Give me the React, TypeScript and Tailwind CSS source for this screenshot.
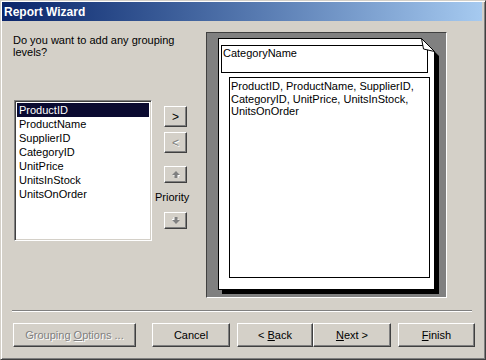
import React from 'react'

const FIELDS = ['ProductID', 'ProductName', 'SupplierID', 'CategoryID', 'UnitPrice', 'UnitsInStock', 'UnitsOnOrder']

// classic raised 3D button edge
const raised =
  'border border-t-white border-l-white border-r-[#404040] border-b-[#404040] shadow-[inset_-1px_-1px_0_#808080] bg-[#d4d0c8]'

const disabledText = 'text-[#808080] [text-shadow:1px_1px_0_#ffffff]'

function Arrow({ down }: { down?: boolean }) {
  return (
    <svg width="8" height="7" viewBox="0 0 8 7" className={down ? 'rotate-180' : ''}>
      <path d="M4 0 L8 4 L5.5 4 L5.5 7 L2.5 7 L2.5 4 L0 4 Z" fill="#ffffff" transform="translate(1 1)" />
      <path d="M4 0 L8 4 L5.5 4 L5.5 7 L2.5 7 L2.5 4 L0 4 Z" fill="#808080" />
    </svg>
  )
}

function Btn({ w, children, disabled }: { w: string; children: React.ReactNode; disabled?: boolean }) {
  return (
    <div className={`${w} h-[24px] flex items-center justify-center text-[11px] ${raised} ${disabled ? disabledText : 'text-black'}`}>
      {children}
    </div>
  )
}

export default function App() {
  return (
    <div className="w-[486px] h-[360px] overflow-hidden bg-[#d4d0c8] font-['Liberation_Sans',Arial,sans-serif] text-black border border-t-[#d4d0c8] border-l-[#d4d0c8] border-r-[#404040] border-b-[#404040] shadow-[inset_1px_1px_0_#ffffff,inset_-1px_-1px_0_#808080] pl-[1px] pr-[3px] pt-[1px]">
      {/* Title bar */}
      <div className="h-[19px] flex items-center pl-[2px] bg-gradient-to-r from-[#0a246a] to-[#a6caf0]">
        <span className="text-white text-[12px] font-bold leading-none">Report Wizard</span>
      </div>

      {/* Body */}
      <div className="flex h-[289px] pl-[11px] pt-[11px]">
        <div className="w-[193px] flex flex-col">
          <p className="mt-[2px] text-[11px] leading-[12px]">
            Do you want to add any grouping
            <br />
            levels?
          </p>

          <div className="mt-[42px] ml-[1px] flex">
            {/* Field list */}
            <div className="w-[138px] h-[141px] bg-white border border-t-[#808080] border-l-[#808080] border-r-white border-b-white shadow-[inset_1px_1px_0_#404040,inset_-1px_-1px_0_#d4d0c8] p-[2px]">
              {FIELDS.map((f, i) => (
                <div
                  key={f}
                  className={`h-[14px] leading-[14px] text-[11px] px-[2px] ${i === 0 ? 'bg-[#0a0a30] text-white' : ''}`}
                >
                  {f}
                </div>
              ))}
            </div>

            {/* Move / priority controls */}
            <div className="ml-[3px] w-[35px] flex flex-col">
              <div className={`ml-[9px] mt-[6px] w-[23px] h-[21px] flex items-center justify-center text-[12px] ${raised}`}>&gt;</div>
              <div className={`ml-[9px] mt-[5px] w-[23px] h-[21px] flex items-center justify-center text-[12px] ${raised} ${disabledText}`}>&lt;</div>
              <div className={`ml-[9px] mt-[13px] w-[23px] h-[17px] flex items-center justify-center ${raised}`}>
                <Arrow />
              </div>
              <div className="mt-[8px] text-[11px] leading-[13px]">Priority</div>
              <div className={`ml-[9px] mt-[8px] w-[23px] h-[17px] flex items-center justify-center ${raised}`}>
                <Arrow down />
              </div>
            </div>
          </div>
        </div>

        {/* Preview */}
        <div className="w-[241px] h-[266px] bg-[#808080] border border-t-[#404040] border-l-[#404040] border-r-white border-b-white pl-[11px] pt-[5px]">
          <div className="relative w-[217px] h-[252px] bg-white border border-black shadow-[4px_4px_0_#000000]">
            <div className="ml-[2px] mt-[6px] w-[207px] h-[28px] border border-black text-[11px] leading-[13px] pl-[1px] pt-[1px]">
              CategoryName
            </div>
            <div className="ml-[10px] mt-[4px] w-[201px] h-[201px] border border-black text-[11px] leading-[12.5px] pl-[1px] pt-[2px]">
              ProductID, ProductName, SupplierID, CategoryID, UnitPrice, UnitsInStock, UnitsOnOrder
            </div>
            {/* folded corner */}
            <svg width="19" height="19" viewBox="0 0 19 19" className="absolute -top-[1px] -right-[5px]">
              <polygon points="1,0 19,0 19,18 15,14" fill="#808080" />
              <polygon points="1.5,0.5 3.5,11 14.5,13.5" fill="#ffffff" stroke="#000000" strokeWidth="1" />
            </svg>
          </div>
        </div>
      </div>

      {/* Separator */}
      <div className="mx-[10px] border-t border-t-[#808080] border-b border-b-white" />

      {/* Buttons */}
      <div className="flex pl-[11px] pt-[11px]">
        <Btn w="w-[123px]" disabled>
          Grouping&nbsp;<span className="underline">O</span>ptions ...
        </Btn>
        <div className="ml-[16px]">
          <Btn w="w-[78px]">Cancel</Btn>
        </div>
        <div className="ml-[7px]">
          <Btn w="w-[76px]">
            &lt;&nbsp;<span className="underline">B</span>ack
          </Btn>
        </div>
        <Btn w="w-[78px]">
          <span className="underline">N</span>ext&nbsp;&gt;
        </Btn>
        <div className="ml-[7px]">
          <Btn w="w-[77px]">
            <span className="underline">F</span>inish
          </Btn>
        </div>
      </div>
    </div>
  )
}
